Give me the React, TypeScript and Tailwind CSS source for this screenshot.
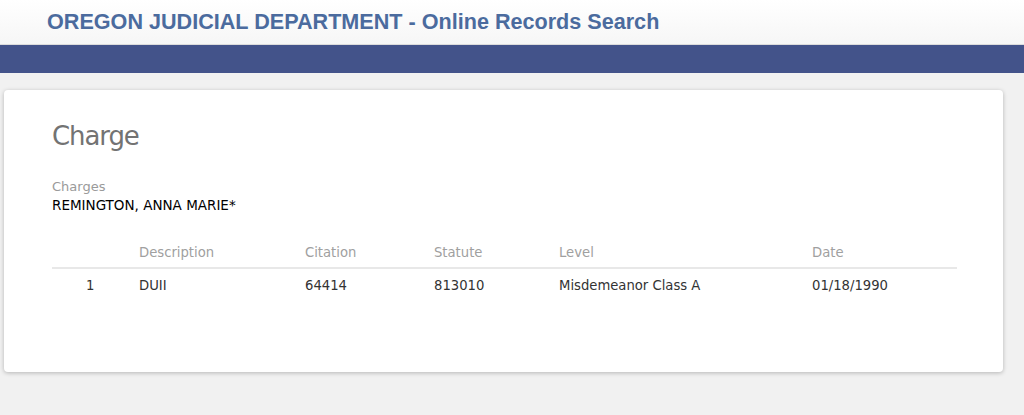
const columns = [
  { label: '', w: 'w-[87px]' },
  { label: 'Description', w: 'w-[166px]' },
  { label: 'Citation', w: 'w-[129px]' },
  { label: 'Statute', w: 'w-[125px]' },
  { label: 'Level', w: 'w-[253px]' },
  { label: 'Date', w: 'w-[145px]' },
]

const rows = [['1', 'DUII', '64414', '813010', 'Misdemeanor Class A', '01/18/1990']]

const App = () => {
  return (
    <div className="min-h-[415px] bg-[#f1f1f1] font-['DejaVu_Sans',sans-serif]">
      {/* site header */}
      <header className="h-[45px] bg-gradient-to-b from-white to-[#f6f6f6] border-b border-[#dcdcdc] pl-[47px] pt-[9px]">
        <h1 className="font-['Liberation_Sans',Arial,sans-serif] font-bold text-[21.6px] leading-[26px] text-[#4b6b9e]">
          OREGON JUDICIAL DEPARTMENT - Online Records Search
        </h1>
      </header>
      <div className="h-[28px] bg-[#43538a]" />

      <div className="pt-[17px] pl-[4px] pr-[21px]">
        <div className="bg-white rounded-[4px] shadow-[0_1px_4px_rgba(0,0,0,0.25)] h-[282px] pl-[48px] pr-[46px] pt-[30px]">
          <h2 className="text-[26px] leading-[32px] text-[#737373] tracking-[-1.1px]">Charge</h2>

          <div className="mt-[26px]">
            <div className="text-[13px] leading-[18px] text-[#9a9a9a]">Charges</div>
            <div className="text-[13.5px] leading-[19px] text-black">REMINGTON, ANNA MARIE*</div>
          </div>

          <div className="mt-[24px] text-[13.2px]">
            <div className="flex h-[30px] items-center border-b-2 border-[#e8e8e8] text-[#a0a0a0]">
              {columns.map((c, i) => (
                <div key={i} className={c.w}>{c.label}</div>
              ))}
            </div>
            {rows.map((r, ri) => (
              <div key={ri} className="flex h-[34px] items-center text-[#333]">
                {r.map((cell, ci) => (
                  <div key={ci} className={ci === 0 ? `${columns[ci].w} pl-[34px]` : columns[ci].w}>
                    {cell}
                  </div>
                ))}
              </div>
            ))}
          </div>
        </div>
      </div>
    </div>
  )
}

export default App
